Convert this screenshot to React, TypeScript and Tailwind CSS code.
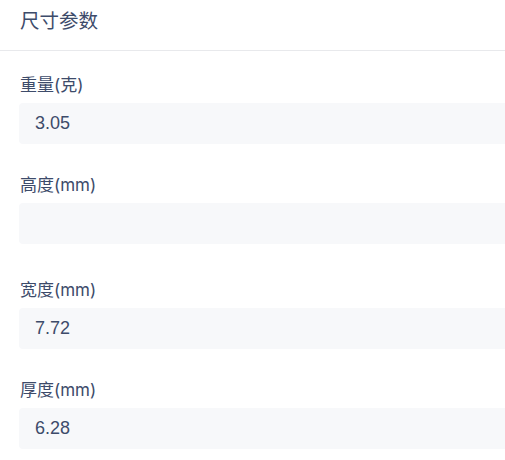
const fields = [
  { label: '重量(克)', value: '3.05' },
  { label: '高度(mm)', value: '' },
  { label: '宽度(mm)', value: '7.72' },
  { label: '厚度(mm)', value: '6.28' },
];

export default function App() {
  return (
    <div
      className="w-[505px] h-[460px] overflow-hidden bg-white text-[#3d4b6a]"
      style={{ fontFamily: '"Inter", "Noto Sans CJK SC", sans-serif' }}
    >
      {/* Section header */}
      <div className="h-[51px] border-b border-[#e8e9ec] pl-[20px] pt-[7px]">
        <h2 className="text-[19.5px] leading-[28px]">尺寸参数</h2>
      </div>

      <div className="w-[540px] pl-[19px] pt-[22px]">
        {fields.map((f, i) => (
          <div key={f.label} className={i === 1 ? 'mb-[34px]' : 'mb-[29px]'}>
            <label className="block pl-px text-[17px] leading-[24px]">{f.label}</label>
            <div
              className="mt-[6px] flex h-[41px] items-center rounded-[4px] bg-[#f7f8fa] pl-[16px] text-[18px]"
              style={{ fontFamily: '"Liberation Sans", "Noto Sans CJK SC", sans-serif' }}
            >
              {f.value}
            </div>
          </div>
        ))}
      </div>
    </div>
  );
}
